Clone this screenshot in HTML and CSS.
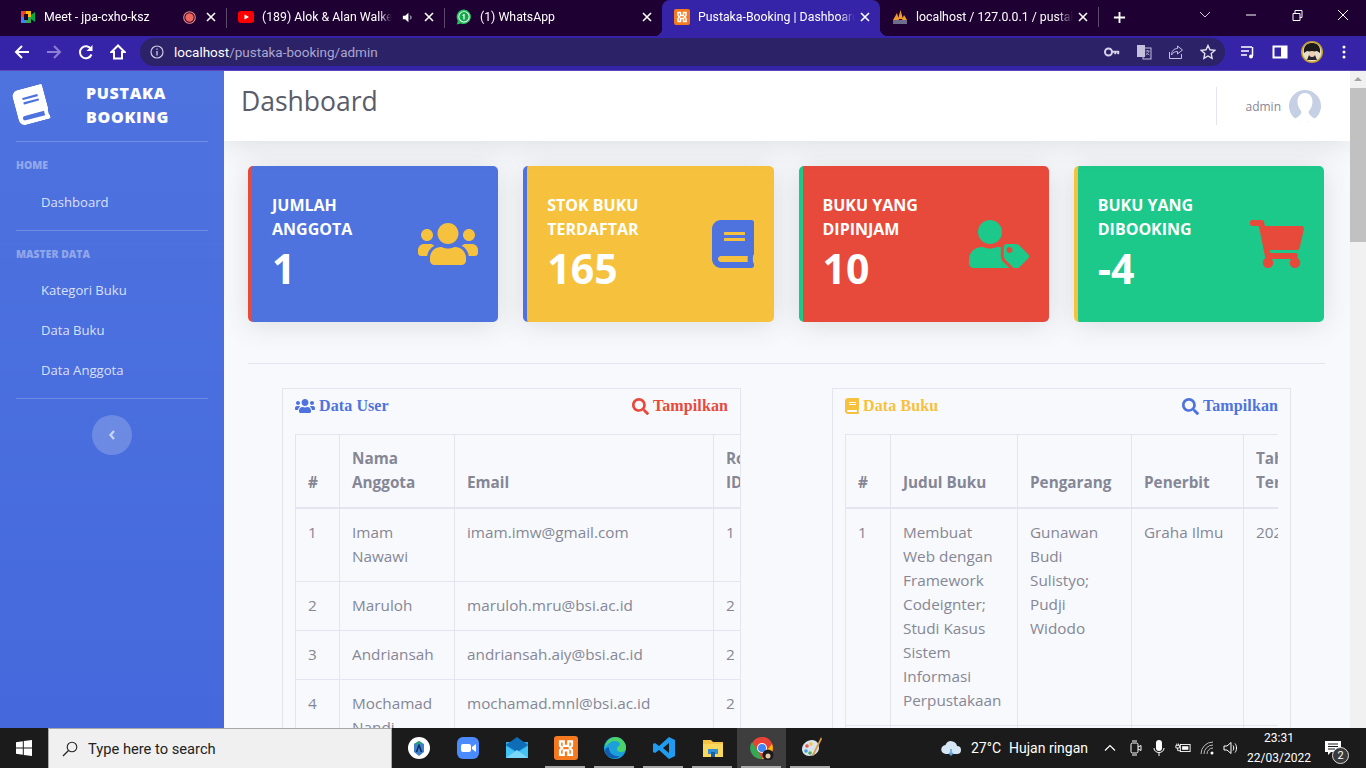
FILE: index.html
```html
<!DOCTYPE html>
<html lang="id">
<head>
<meta charset="utf-8">
<title>Pustaka-Booking | Dashboard</title>
<link rel="stylesheet" href="styles.css">
</head>
<body>
<svg class="defs" aria-hidden="true">
  <symbol id="i-users" viewBox="0 0 640 512"><path d="M96 224c35.3 0 64-28.7 64-64s-28.7-64-64-64-64 28.7-64 64 28.7 64 64 64zm448 0c35.3 0 64-28.7 64-64s-28.7-64-64-64-64 28.7-64 64 28.7 64 64 64zm32 32h-64c-17.6 0-33.5 7.1-45.1 18.6 40.3 22.1 68.9 62 75.1 109.4h66c17.7 0 32-14.3 32-32v-32c0-35.3-28.7-64-64-64zm-256 0c61.9 0 112-50.1 112-112S381.9 32 320 32 208 82.1 208 144s50.1 112 112 112zm76.8 32h-8.3c-20.8 10-43.9 16-68.5 16s-47.6-6-68.5-16h-8.3C179.6 288 128 339.6 128 403.2V432c0 26.5 21.5 48 48 48h288c26.5 0 48-21.5 48-48v-28.8c0-63.6-51.6-115.2-115.2-115.2zm-223.7-13.4C161.5 263.1 145.6 256 128 256H64c-35.3 0-64 28.7-64 64v32c0 17.7 14.3 32 32 32h65.9c6.3-47.4 34.9-87.3 75.2-109.4z"/></symbol>
  <symbol id="i-book" viewBox="0 0 448 512"><path d="M448 360V24c0-13.3-10.7-24-24-24H96C43 0 0 43 0 96v320c0 53 43 96 96 96h328c13.3 0 24-10.7 24-24v-16c0-7.5-3.5-14.3-8.9-18.7-4.2-15.4-4.2-59.3 0-74.7 5.4-4.3 8.9-11.1 8.9-18.6zM128 134c0-3.3 2.7-6 6-6h212c3.3 0 6 2.7 6 6v20c0 3.3-2.7 6-6 6H134c-3.3 0-6-2.7-6-6v-20zm0 64c0-3.3 2.7-6 6-6h212c3.3 0 6 2.7 6 6v20c0 3.3-2.7 6-6 6H134c-3.3 0-6-2.7-6-6v-20zm253.4 250H96c-17.7 0-32-14.3-32-32 0-17.6 14.4-32 32-32h285.4c-1.9 17.1-1.9 46.9 0 64z"/></symbol>
  <symbol id="i-tag" viewBox="0 0 640 512"><path d="M630.6 364.9l-90.3-90.2c-12-12-28.3-18.7-45.3-18.7h-92.5c-17.7 0-32 14.3-32 32v92.5c0 17 6.7 33.3 18.7 45.3l90.3 90.2c12.5 12.5 32.8 12.5 45.3 0l106.5-106.5c12.4-12.5 12.4-32.8-.2-45.3zM432 352c-17.7 0-32-14.3-32-32s14.3-32 32-32 32 14.3 32 32-14.3 32-32 32zM224 256c70.7 0 128-57.3 128-128S294.7 0 224 0 96 57.3 96 128s57.3 128 128 128zM134.4 288h16.7c22.3 10.2 46.9 16 72.9 16s50.6-5.8 72.9-16H339v92c0 25 10 50 28 68l64 64H48c-26.5 0-48-21.5-48-48v-41.6C0 348.2 60.2 288 134.4 288z"/></symbol>
  <symbol id="i-cart" viewBox="0 0 576 512"><path d="M528.12 301.319l47.273-208C578.806 78.301 567.391 64 551.99 64H159.208l-9.166-44.81C147.758 8.021 137.93 0 126.529 0H24C10.745 0 0 10.745 0 24v16c0 13.255 10.745 24 24 24h69.883l70.248 343.435C147.325 417.1 136 435.222 136 456c0 30.928 25.072 56 56 56s56-25.072 56-56c0-15.674-6.447-29.835-16.824-40h209.647C430.447 426.165 424 440.326 424 456c0 30.928 25.072 56 56 56s56-25.072 56-56c0-22.172-12.888-41.332-31.579-50.405l5.517-24.276c3.413-15.018-8.002-29.319-23.403-29.319H218.117l-6.545-32h293.145c11.206 0 20.92-7.754 23.403-18.681z"/></symbol>
  <symbol id="i-search" viewBox="0 0 512 512"><path d="M505 442.7L405.3 343c-4.5-4.5-10.6-7-17-7H372c27.6-35.3 44-79.7 44-128C416 93.1 322.9 0 208 0S0 93.1 0 208s93.1 208 208 208c48.3 0 92.7-16.4 128-44v16.3c0 6.4 2.5 12.5 7 17l99.7 99.7c9.4 9.4 24.6 9.4 33.9 0l28.3-28.3c9.4-9.4 9.4-24.6.1-34zM208 336c-70.7 0-128-57.2-128-128 0-70.7 57.2-128 128-128 70.7 0 128 57.2 128 128 0 70.7-57.2 128-128 128z"/></symbol>
  <symbol id="i-x" viewBox="0 0 12 12"><path d="M2 2l8 8M10 2l-8 8" fill="none" stroke="currentColor" stroke-width="1.6"/></symbol>
  <symbol id="i-xampp" viewBox="0 0 16 16"><rect width="16" height="16" rx="2" fill="#f4791f"/><path d="M4 3.5h2.5v3h3v-3H12v3l-1.5 1.5L12 9.500v3H9.500v-3h-3v3H4v-3L5.500 8 4 6.500z" fill="none" stroke="#fff" stroke-width="1.5"/></symbol>
</svg>

<header class="tabbar">
  <div class="tab">
    <svg class="favicon" viewBox="0 0 16 16"><rect x="1" y="2" width="5" height="6" fill="#ea4335"/><rect x="6" y="2" width="5" height="6" fill="#fbbc04"/><rect x="1" y="8" width="5" height="6" fill="#4285f4"/><rect x="6" y="8" width="5" height="6" fill="#34a853"/><path d="M11 6l4-3v10l-4-3z" fill="#00ac47"/><rect x="4" y="5" width="4" height="6" fill="#1f0033"/></svg>
    <span class="tab-title">Meet - jpa-cxho-ksz</span>
    <svg class="tab-extra" viewBox="0 0 14 14"><circle cx="7" cy="7" r="6.200" fill="none" stroke="#f28b82" stroke-width="1.200"/><circle cx="7" cy="7" r="4.500" fill="#ee675c"/></svg>
    <svg class="tab-close"><use href="#i-x"/></svg>
  </div>
  <div class="tab tab-sep">
    <svg class="favicon" viewBox="0 0 16 16"><rect y="2" width="16" height="12" rx="3" fill="#f00"/><path d="M6.500 5.500L11 8l-4.500 2.500z" fill="#fff"/></svg>
    <span class="tab-title">(189) Alok &amp; Alan Walker - Sing Me to Sleep</span>
    <svg class="tab-extra" viewBox="0 0 14 14"><path d="M2 5h2.500L8 2v10L4.500 9H2z" fill="#fff"/><path d="M10 5c1 1 1 3 0 4" fill="none" stroke="#fff"/></svg>
    <svg class="tab-close"><use href="#i-x"/></svg>
  </div>
  <div class="tab tab-sep">
    <svg class="favicon" viewBox="0 0 16 16"><path d="M8 .500a7.300 7.300 0 0 0-6.200 11.200L.800 15.500l3.900-1A7.300 7.300 0 1 0 8 .500z" fill="#25c15b"/><circle cx="8" cy="7.800" r="5.600" fill="#fff"/><circle cx="8" cy="7.800" r="4.700" fill="#12a84a"/><path d="M8.600 5v5.500H7.400V6.300L6.400 7V5.900L7.800 5z" fill="#fff"/></svg>
    <span class="tab-title">(1) WhatsApp</span>
    <svg class="tab-close"><use href="#i-x"/></svg>
  </div>
  <div class="tab tab-active">
    <svg class="favicon"><use href="#i-xampp"/></svg>
    <span class="tab-title">Pustaka-Booking | Dashboard</span>
    <svg class="tab-close"><use href="#i-x"/></svg>
  </div>
  <div class="tab">
    <svg class="favicon" viewBox="0 0 16 16"><path d="M1 11L5 4l2 7zM6 10L8.500 1 11 10zM10 11l2-5 3 5z" fill="#f29a2e"/><rect x="1" y="11" width="14" height="4" fill="#6c6c8c"/></svg>
    <span class="tab-title">localhost / 127.0.0.1 / pustaka_booking</span>
    <svg class="tab-close"><use href="#i-x"/></svg>
  </div>
  <div class="tab-new"><span class="new-sep"></span><svg class="plus" viewBox="0 0 14 14"><path d="M7 1v12M1 7h12" stroke="#fff" stroke-width="2"/></svg></div>
  <div class="winctl">
    <svg class="winbtn" viewBox="0 0 46 16"><path d="M18 5l5 5 5-5" fill="none" stroke="#cfcfd8"/></svg>
    <svg class="winbtn" viewBox="0 0 46 16"><path d="M18 8h10" stroke="#fff"/></svg>
    <svg class="winbtn" viewBox="0 0 46 16"><path d="M19 6.500h7v7h-7zM21 6V3.500h7v7h-2" fill="none" stroke="#fff"/></svg>
    <svg class="winbtn" viewBox="0 0 46 16"><path d="M18 3l10 10M28 3L18 13" stroke="#fff"/></svg>
  </div>
</header>

<nav class="toolbar">
  <svg class="tool" viewBox="0 0 16 16"><path d="M15 8H2M8 2L2 8l6 6" fill="none" stroke="#fff" stroke-width="2"/></svg>
  <svg class="tool" viewBox="0 0 16 16"><path d="M1 8h13M8 2l6 6-6 6" fill="none" stroke="#8d80d4" stroke-width="2"/></svg>
  <svg class="tool" viewBox="0 0 16 16"><path d="M13.500 10.500A6 6 0 1 1 13 5" fill="none" stroke="#fff" stroke-width="2"/><path d="M14.500 1v6h-6z" fill="#fff"/></svg>
  <svg class="tool" viewBox="0 0 16 16"><path d="M8 1.500L1.500 8H4v6.500h8V8h2.500z" fill="none" stroke="#fff" stroke-width="2"/></svg>
  <div class="omnibox">
    <svg class="omni-info" viewBox="0 0 14 14"><circle cx="7" cy="7" r="6" fill="none" stroke="#cfcbe8" stroke-width="1.200"/><path d="M7 6v4.500M7 3.500v1.300" stroke="#cfcbe8" stroke-width="1.300"/></svg>
    <span class="url"><b class="url-host">localhost</b>/pustaka-booking/admin</span>
    <span class="omni-actions">
      <svg class="omni-act" viewBox="0 0 16 16"><circle cx="4.500" cy="8" r="3.500" fill="none" stroke="#d6d3ea" stroke-width="2"/><path d="M8 7h7v3h-1.500v-1.500H12V10h-1.500V8.500H8z" fill="#d6d3ea" stroke="#d6d3ea" stroke-width=".5"/></svg>
      <svg class="omni-act" viewBox="0 0 16 16"><rect x="1" y="1" width="8" height="12" fill="#c4c1dc"/><rect x="7" y="4" width="8" height="11" fill="none" stroke="#c4c1dc"/><path d="M9.500 7h4M11.500 6v1M13 7c-.5 2-2 3.500-3.500 4M10 8.500c.8 1.200 2 2 3.500 2.500" stroke="#c4c1dc" fill="none" stroke-width=".8"/></svg>
      <svg class="omni-act" viewBox="0 0 16 16"><path d="M1.500 8v6.500h12V10" fill="none" stroke="#c4c1dc"/><path d="M9.500 2l5 4-5 4V7.500c-3 0-4.500 1-6 3.500 0-4 2.500-6.500 6-6.500z" fill="none" stroke="#c4c1dc"/></svg>
      <svg class="omni-act" viewBox="0 0 16 16"><path d="M8 1.500l2 4.300 4.700.6-3.500 3.200.9 4.700L8 12l-4.100 2.300.9-4.700L1.300 6.400 6 5.800z" fill="none" stroke="#e5e3f3" stroke-width="1.400"/></svg>
    </span>
  </div>
  <svg class="tool2" viewBox="0 0 16 16"><path d="M1 3h11M1 7h8M1 11h6" stroke="#fff" stroke-width="1.500"/><path d="M12.500 3v9" stroke="#fff" stroke-width="1.500"/><circle cx="11" cy="12.500" r="2" fill="#fff"/></svg>
  <svg class="tool2" viewBox="0 0 16 16"><path d="M1.500 2.500h13v11h-13z" fill="none" stroke="#fff" stroke-width="2"/><rect x="9" y="2.500" width="5" height="11" fill="#fff"/></svg>
  <svg class="tool2 profile" viewBox="0 0 24 24"><circle cx="12" cy="12" r="11" fill="#c9a227"/><circle cx="12" cy="12" r="9.500" fill="#e4dfc9"/><path d="M4 13C3 5 8 3 12 3s9 2 8 10l-3-2-5 1-5-1z" fill="#1d1a1a"/><path d="M7 20l2-5h6l2 5z" fill="#2a2430"/><circle cx="12" cy="14" r="3" fill="#eecfb4"/></svg>
  <svg class="tool2" viewBox="0 0 16 16"><circle cx="8" cy="3" r="1.500" fill="#fff"/><circle cx="8" cy="8" r="1.500" fill="#fff"/><circle cx="8" cy="13" r="1.500" fill="#fff"/></svg>
</nav>

<div class="viewport">
  <aside class="sidebar">
    <div class="brand">
      <svg class="brand-icon"><use href="#i-book"/></svg>
      <span class="brand-text">Pustaka Booking</span>
    </div>
    <hr class="side-hr">
    <div class="side-head">Home</div>
    <a class="side-link">Dashboard</a>
    <hr class="side-hr side-hr-b">
    <div class="side-head">Master Data</div>
    <a class="side-link">Kategori Buku</a>
    <a class="side-link">Data Buku</a>
    <a class="side-link">Data Anggota</a>
    <hr class="side-hr side-hr-c">
    <div class="side-toggle"><svg class="chev" viewBox="0 0 8 12"><path d="M6 2L2.500 6 6 10" fill="none" stroke="#c6d2f3" stroke-width="2.400"/></svg></div>
  </aside>

  <main class="main">
    <div class="topbar">
      <h1 class="page-title">Dashboard</h1>
      <div class="user">
        <span class="user-name">admin</span>
        <svg class="user-avatar" viewBox="0 0 32 32"><circle cx="16" cy="16" r="16" fill="#c5d0e4"/><path d="M16 3c5 0 7.500 4 7.500 9 0 4-2 7-3.500 9-1 1.500 0 3 2 5 1 1 3 2.500 5 2.500A16 16 0 0 1 16 32a16 16 0 0 1-11-3.500c2 0 4-1.500 5-2.500 2-2 3-3.500 2-5-1.500-2-3.500-5-3.500-9 0-5 2.500-9 7.500-9z" fill="#fff"/></svg>
      </div>
    </div>

    <div class="content">
      <section class="cards">
        <article class="card card-blue">
          <div class="card-text"><div class="card-label">Jumlah Anggota</div><div class="card-num">1</div></div>
          <svg class="card-icon icon-users"><use href="#i-users"/></svg>
        </article>
        <article class="card card-yellow">
          <div class="card-text"><div class="card-label">Stok Buku Terdaftar</div><div class="card-num">165</div></div>
          <svg class="card-icon icon-book"><use href="#i-book"/></svg>
        </article>
        <article class="card card-red">
          <div class="card-text"><div class="card-label">Buku Yang Dipinjam</div><div class="card-num">10</div></div>
          <svg class="card-icon icon-users"><use href="#i-tag"/></svg>
        </article>
        <article class="card card-green">
          <div class="card-text"><div class="card-label">Buku Yang Dibooking</div><div class="card-num">-4</div></div>
          <svg class="card-icon icon-cart"><use href="#i-cart"/></svg>
        </article>
      </section>

      <hr class="divider">

      <section class="panels">
        <div class="panel">
          <div class="panel-head">
            <span class="panel-title c-blue"><svg class="pi-users"><use href="#i-users"/></svg>Data User</span>
            <span class="panel-title c-red"><svg class="pi-search"><use href="#i-search"/></svg>Tampilkan</span>
          </div>
          <div class="table-wrap table-wrap-l">
            <table class="tbl tbl-user">
              <colgroup><col class="u1"><col class="u2"><col class="u3"><col class="u4"></colgroup>
              <thead><tr><th>#</th><th>Nama Anggota</th><th>Email</th><th>Role ID</th></tr></thead>
              <tbody>
                <tr><td>1</td><td>Imam Nawawi</td><td>imam.imw@gmail.com</td><td>1</td></tr>
                <tr><td>2</td><td>Maruloh</td><td>maruloh.mru@bsi.ac.id</td><td>2</td></tr>
                <tr><td>3</td><td>Andriansah</td><td>andriansah.aiy@bsi.ac.id</td><td>2</td></tr>
                <tr><td>4</td><td>Mochamad Nandi</td><td>mochamad.mnl@bsi.ac.id</td><td>2</td></tr>
              </tbody>
            </table>
          </div>
        </div>
        <div class="panel">
          <div class="panel-head">
            <span class="panel-title c-yellow"><svg class="pi-book"><use href="#i-book"/></svg>Data Buku</span>
            <span class="panel-title c-blue"><svg class="pi-search"><use href="#i-search"/></svg>Tampilkan</span>
          </div>
          <div class="table-wrap table-wrap-r">
            <table class="tbl tbl-book">
              <colgroup><col class="b1"><col class="b2"><col class="b3"><col class="b4"><col class="b5"></colgroup>
              <thead><tr><th>#</th><th>Judul Buku</th><th>Pengarang</th><th>Penerbit</th><th>Tahun Terbit</th></tr></thead>
              <tbody>
                <tr><td>1</td><td>Membuat Web dengan Framework Codeignter; Studi Kasus Sistem Informasi Perpustakaan</td><td>Gunawan Budi Sulistyo; Pudji Widodo</td><td>Graha Ilmu</td><td>2020</td></tr>
                <tr><td>2</td><td></td><td></td><td></td><td></td></tr>
              </tbody>
            </table>
          </div>
        </div>
      </section>
    </div>
  </main>

  <div class="scrollbar">
    <span class="scroll-up"></span>
    <span class="scroll-thumb"></span>
  </div>
</div>

<footer class="taskbar">
  <div class="start"><svg class="win-logo" viewBox="0 0 16 16"><path d="M0 2.200L6.800 1.200V7.500H0zM7.800 1L16 0V7.500H7.800zM0 8.500H6.800V14.800L0 13.800zM7.800 8.500H16V16L7.800 15z" fill="#fff"/></svg></div>
  <div class="search"><svg class="search-glass" viewBox="0 0 16 16"><circle cx="10" cy="6" r="4.800" fill="none" stroke="#222" stroke-width="1.100"/><path d="M6.500 9.500L1 15" stroke="#222" stroke-width="1.200"/></svg><span class="search-text">Type here to search</span></div>
  <div class="apps">
    <div class="app"><svg class="app-i" viewBox="0 0 24 24"><circle cx="12" cy="12" r="11" fill="#fff"/><path d="M7 8l5-3 5 3v8l-5 4-5-4z" fill="#3f7fd0"/><path d="M9.500 16L12 9l2.500 7" fill="none" stroke="#0d2a5c" stroke-width="1.500"/><path d="M7 8l5-3 3 2-5 2z" fill="#2aa17a"/></svg></div>
    <div class="app"><svg class="app-i" viewBox="0 0 24 24"><rect x="1" y="1" width="22" height="22" rx="6" fill="#4a8cff"/><rect x="5" y="8" width="10" height="8" rx="2" fill="#fff"/><path d="M16 11l4-3v8l-4-3z" fill="#fff"/></svg></div>
    <div class="app"><svg class="app-i" viewBox="0 0 24 24"><rect x="1" y="6" width="22" height="16" fill="#2aa5e6"/><path d="M1 9l11-8 11 8-11 7z" fill="#0f6cb6"/><path d="M1 10l11 7 11-7v12H1z" fill="#42c2f5"/><path d="M1 22l11-8 11 8z" fill="#7bd8fb"/></svg></div>
    <div class="app app-open"><svg class="app-i" viewBox="0 0 16 16"><use href="#i-xampp"/></svg></div>
    <div class="app app-open"><svg class="app-i" viewBox="0 0 24 24"><circle cx="12" cy="12" r="11" fill="#1ba0dc"/><path d="M12 1a11 11 0 0 1 11 11c0 3-3 4.500-6 4-2-.3-3-1.500-3-3 0-3 3-3 3-5-1-3-6-4-9-2-3 1.500-5 4-6 6A11 11 0 0 1 12 1z" fill="#4bd36b"/><path d="M6 12c0 6 6 9 11 8-6 5-15 1-15-6 1-2 3-3 4-2z" fill="#0f5cb0"/></svg></div>
    <div class="app app-open"><svg class="app-i" viewBox="0 0 24 24"><path d="M17 1l6 3v16l-6 3-10-9-4 3-2-1V8l2-1 4 3zm0 6l-6 5 6 5z" fill="#1f9cf0"/></svg></div>
    <div class="app app-open"><svg class="app-i" viewBox="0 0 24 24"><path d="M2 4h8l2 2h10v15H2z" fill="#f5c344"/><rect x="2" y="8" width="20" height="13" fill="#fbd75b"/><rect x="7" y="13" width="10" height="5" fill="#2f8fd8"/><rect x="10" y="16" width="4" height="5" fill="#1a5fa0"/></svg></div>
    <div class="app app-open app-active"><svg class="app-i" viewBox="0 0 24 24"><circle cx="12" cy="12" r="11" fill="#ea4335"/><path d="M12 1a11 11 0 0 1 10 7H12z" fill="#ea4335"/><path d="M22 8a11 11 0 0 1-10 15l5-9z" fill="#fbbc04"/><path d="M2 6l6 9 4 8A11 11 0 0 1 2 6z" fill="#34a853"/><circle cx="12" cy="12" r="5" fill="#fff"/><circle cx="12" cy="12" r="4" fill="#4285f4"/><circle cx="18" cy="19" r="5.500" fill="#1c1a1a"/><circle cx="18" cy="20" r="2.500" fill="#e6c9a8"/></svg></div>
    <div class="app app-open"><svg class="app-i" viewBox="0 0 24 24"><path d="M3 13c0-5 5-9 10-9s7 4 7 8-4 8-10 8c-4 0-7-3-7-7z" fill="#d8e3ec"/><circle cx="8" cy="10" r="1.800" fill="#e8534a"/><circle cx="12" cy="8" r="1.800" fill="#f5c344"/><circle cx="7" cy="15" r="1.800" fill="#3e9fe0"/><circle cx="11" cy="17" r="1.800" fill="#49b05a"/><path d="M22 1l-9 18 1.500 1L23 3z" fill="#d89a45"/></svg></div>
  </div>
  <div class="tray">
    <svg class="weather" viewBox="0 0 22 18"><path d="M6 15a4.500 4.500 0 0 1-.5-9A6 6 0 0 1 17 7a4 4 0 0 1 0 8z" fill="#d6e6f5"/><path d="M11 10v6M9 14l2 2 2-2" fill="none" stroke="#5aa0dc" stroke-width="1.500"/></svg>
    <span class="tray-text temp">27°C</span>
    <span class="tray-text cond">Hujan ringan</span>
    <svg class="tray-i chevup" viewBox="0 0 16 16"><path d="M3 10.500L8 5.500l5 5" fill="none" stroke="#fff" stroke-width="1.200"/></svg>
    <svg class="tray-i" viewBox="0 0 16 16"><rect x="4" y="3" width="7" height="10" rx="1.500" fill="none" stroke="#fff"/><path d="M11 7l3-1.500v5L11 9M5 1h5M5 15h5" stroke="#fff" fill="none"/></svg>
    <svg class="tray-i" viewBox="0 0 16 16"><rect x="5" y="0" width="6" height="11" rx="3" fill="#fff"/><path d="M3 8c0 6 10 6 10 0M8 13v3" fill="none" stroke="#fff"/></svg>
    <svg class="tray-i" viewBox="0 0 18 16"><rect x="6" y="4" width="11" height="8" fill="none" stroke="#fff"/><rect x="8" y="6" width="7" height="4" fill="#fff"/><path d="M1 5h4v3H1zM2 3v2M4 3v2M3 8v3h3" stroke="#fff" fill="none"/></svg>
    <svg class="tray-i" viewBox="0 0 16 16"><path d="M2 14a12 12 0 0 1 12-12M5 14a9 9 0 0 1 9-9M8 14a6 6 0 0 1 6-6" fill="none" stroke="#bbb"/><circle cx="13" cy="13" r="1.500" fill="#fff"/></svg>
    <svg class="tray-i" viewBox="0 0 16 16"><path d="M1 6h3l4-3.500v11L4 10H1z" fill="none" stroke="#fff"/><path d="M10 5.500c1 1.500 1 3.500 0 5M12 3.500c2 2.500 2 6.500 0 9" fill="none" stroke="#fff"/></svg>
    <div class="clock"><span>23:31</span><span>22/03/2022</span></div>
    <div class="notif">
      <svg class="notif-i" viewBox="0 0 16 16"><path d="M0 1h16v11H6l-3 3v-3H0z" fill="#fff"/><path d="M3 4h10M3 6.500h10M3 9h7" stroke="#1b1b1b"/></svg>
      <span class="notif-badge">2</span>
    </div>
  </div>
</footer>
</body>
</html>
```

FILE: styles.css
```css
* { box-sizing: border-box; }
html, body { margin: 0; height: 100%; overflow: hidden; }
body { display: flex; flex-direction: column; width: 1366px; height: 768px; font-family: "Open Sans", "Liberation Sans", sans-serif; background: #f8f9fc; }
.defs { display: none; }

/* browser tabs */
.tabbar { display: flex; align-items: stretch; height: 36px; background: #1f0033; padding-left: 8px; flex: none; }
.tab { position: relative; display: flex; align-items: center; flex: none; width: 218px; padding: 0 9px 2px 12px; color: #fff; font: 12.300px/16px Roboto, "Open Sans", sans-serif; }
.tab-sep::before { content: ""; position: absolute; left: 0; top: 8px; height: 20px; width: 1px; background: #5c4a6c; }
.tab-active { background: #3524a8; border-radius: 8px 8px 0 0; }
.tab-active::before, .tab-active::after { content: ""; position: absolute; bottom: 0; width: 8px; height: 8px; }
.tab-active::before { left: -8px; background: radial-gradient(circle at 0 0, transparent 8px, #3524a8 8.5px); }
.tab-active::after { right: -8px; background: radial-gradient(circle at 100% 0, transparent 8px, #3524a8 8.5px); }
.favicon { width: 16px; height: 16px; flex: none; margin-right: 8px; }
.tab-title { flex: 1; min-width: 0; white-space: nowrap; overflow: hidden; -webkit-mask-image: linear-gradient(90deg, #000 90%, transparent); mask-image: linear-gradient(90deg, #000 90%, transparent); }
.tab-extra { width: 13px; height: 13px; flex: none; margin: 0 5px 0 9px; }
.tab-close { width: 12px; height: 12px; flex: none; color: #fff; margin-left: 4px; }
.tab-new { display: flex; align-items: center; flex: none; width: 84px; padding-bottom: 2px; }
.new-sep { width: 1px; height: 20px; background: #5c4a6c; }
.plus { width: 13px; height: 13px; margin-left: 14px; }
.winctl { margin-left: auto; display: flex; align-items: flex-start; padding-top: 7px; flex: none; }
.winbtn { width: 46px; height: 16px; }

/* toolbar */
.toolbar { display: flex; align-items: center; height: 35px; flex: none; background: #3524a8; border-bottom: 1px solid #5b48b8; padding: 0 0 3px 14px; }
.tool { width: 16px; height: 16px; margin-right: 16px; flex: none; }
.omnibox { display: flex; align-items: center; width: 1085px; height: 28px; margin-left: -2px; margin-right: 15px; border-radius: 14px; background: #2c2267; padding-left: 10px; flex: none; }
.omni-info { width: 14px; height: 14px; margin-right: 10px; }
.url { color: #aaa6d0; font: 13.500px/18px Roboto, sans-serif; white-space: nowrap; }
.url-host { color: #fff; font-weight: 400; }
.omni-actions { margin-left: auto; display: flex; gap: 16px; padding-right: 9px; }
.omni-act { width: 16px; height: 16px; }
.tool2 { width: 16px; height: 16px; margin-right: 16px; flex: none; }
.profile { width: 24px; height: 24px; margin: 0 12px 0 -4px; }

/* page */
.viewport { flex: 1; min-height: 0; display: flex; }
.sidebar { width: 224px; flex: none; background: linear-gradient(180deg, #4e73df 0%, #4569dc 100%); padding: 0 16px; color: #fff; }
.brand { display: flex; align-items: center; height: 70px; padding-bottom: 2px; }
.brand-icon { width: 32px; height: 36px; fill: #fff; transform: rotate(-15deg); margin-left: -1px; flex: none; }
.brand-text { width: 110px; margin-left: 39px; font-weight: 800; font-size: 16px; line-height: 24px; letter-spacing: .7px; text-transform: uppercase; }
.side-hr { border: 0; border-top: 1px solid rgba(255,255,255,.2); margin: 0; }
.side-head { font-size: 10.400px; font-weight: 800; line-height: 14px; color: rgba(255,255,255,.4); text-transform: uppercase; margin: 16px 0 10px; }
.side-hr-b + .side-head { margin-bottom: 9px; }
.side-link { display: block; height: 40px; padding-left: 25px; font-size: 13.100px; line-height: 40px; color: rgba(255,255,255,.8); }
.side-hr-b { margin-top: 8px; }
.side-hr-c { margin-top: 8px; }
.side-toggle { width: 40px; height: 40px; border-radius: 50%; background: rgba(255,255,255,.2); margin: 16px auto 0; display: flex; align-items: center; justify-content: center; }
.chev { width: 8px; height: 12px; }

.main { flex: 1; min-width: 0; overflow: hidden; }
.topbar { display: flex; align-items: center; justify-content: space-between; height: 70px; padding: 0 29px 10px 17px; background: #fff; box-shadow: 0 .15rem 1.75rem rgba(58,59,69,.15); position: relative; }
.page-title { margin: 0; font-size: 26.500px; line-height: 40px; font-weight: 400; color: #5a5c69; }
.user { display: flex; align-items: center; gap: 8px; height: 38px; margin-top: 10px; padding-left: 28px; border-left: 1px solid #e3e6f0; }
.user-name { font-size: 12px; color: #858796; }
.user-avatar { width: 32px; height: 32px; }

.content { padding: 25px 25px 0 24px; }
.cards { display: grid; grid-template-columns: repeat(4, 1fr); gap: 25px; padding-right: 1px; }
.card { display: flex; align-items: center; justify-content: space-between; height: 156px; padding: 0 20px; border-left: 4px solid; border-radius: 5px; color: #fff; box-shadow: 0 .15rem 1.75rem rgba(58,59,69,.15); }
.card-blue { background: #4e73df; border-color: #e74a3b; fill: #f6c23e; }
.card-yellow { background: #f6c23e; border-color: #4e73df; fill: #4e73df; }
.card-red { background: #e74a3b; border-color: #1cc88a; fill: #1cc88a; }
.card-green { background: #1cc88a; border-color: #f6c23e; fill: #e74a3b; }
.card-text { padding-bottom: 3px; }
.card-label { max-width: 130px; margin-bottom: 3px; font-size: 16px; line-height: 24px; font-weight: 700; text-transform: uppercase; }
.card-num { font-size: 41px; line-height: 48px; font-weight: 700; }
.card-icon { height: 48px; flex: none; }
.icon-users { width: 60px; }
.icon-book { width: 42px; }
.icon-cart { width: 54px; }

.divider { border: 0; border-top: 1px solid #e3e6f0; margin: 41px 0 24px; }
.panels { display: grid; grid-template-columns: 1fr 1fr; gap: 91px; padding: 0 34px; }
.panel { border: 1px solid #e3e6f0; min-width: 0; height: 400px; overflow: hidden; }
.panel-head { display: flex; justify-content: space-between; align-items: center; height: 45px; padding: 0 12px 11px; }
.panel-title { display: flex; align-items: center; font: 700 16px/20px "Liberation Serif", serif; letter-spacing: .1px; }
.c-blue { color: #4e73df; fill: #4e73df; }
.c-red { color: #e74a3b; fill: #e74a3b; }
.c-yellow { color: #f6c23e; fill: #f6c23e; }
.pi-users { width: 20px; height: 16px; margin-right: 4px; }
.pi-book { width: 14px; height: 16px; margin-right: 4px; }
.pi-search { width: 17px; height: 17px; margin-right: 4px; }
.table-wrap { overflow: hidden; }
.table-wrap-l { margin-left: 12px; }
.table-wrap-r { margin: 0 12px; }
.tbl { border-collapse: collapse; table-layout: fixed; color: #858796; font-size: 15.300px; line-height: 24px; }
.tbl th, .tbl td { border: 1px solid #e3e6f0; padding: 11px 12px 13px; vertical-align: top; text-align: left; overflow: hidden; }
.tbl th { vertical-align: bottom; font-weight: 700; border-bottom-width: 2px; }
.tbl-user { width: 488px; }
.tbl-book { width: 500px; }
.u1 { width: 44px; } .u2 { width: 115px; } .u3 { width: 259px; } .u4 { width: 70px; }
.b1 { width: 45px; } .b2 { width: 127px; } .b3 { width: 114px; } .b4 { width: 112px; } .b5 { width: 102px; }

.scrollbar { width: 16px; flex: none; background: #f1f1f1; display: flex; flex-direction: column; align-items: center; }
.scroll-up { margin-top: 6px; width: 0; height: 0; border: 4px solid transparent; border-top: 0; border-bottom: 4px solid #a3a3a3; }
.scroll-thumb { width: 100%; height: 154px; margin-top: 7px; background: #c1c1c1; }

/* taskbar */
.taskbar { display: flex; align-items: center; height: 40px; flex: none; background: #1b1b1b; color: #fff; }
.start { width: 48px; display: flex; justify-content: center; }
.win-logo { width: 16px; height: 16px; }
.search { display: flex; align-items: center; width: 344px; height: 40px; background: #f0f0f0; padding-left: 13px; border: 1px solid #a8a8a8; border-bottom: 0; }
.search-glass { width: 16px; height: 16px; margin-right: 10px; }
.search-text { color: #222; font: 14.700px/20px Roboto, sans-serif; padding-top: 1px; }
.apps { display: flex; padding-left: 2px; }
.app { position: relative; width: 49px; height: 40px; display: flex; align-items: center; justify-content: center; }
.app-open::after { content: ""; position: absolute; left: 4px; right: 5px; bottom: 0; height: 2px; background: #a9a9a9; }
.app-active { background: #3e3e3e; }
.app-i { width: 24px; height: 24px; }
.tray { margin-left: auto; display: flex; align-items: center; padding-right: 10px; font: 14px/18px Roboto, sans-serif; }
.weather { width: 22px; height: 18px; margin-right: 9px; }
.tray-text { color: #fff; }
.temp { margin-right: 8px; }
.cond { margin-right: 14px; }
.tray-i { width: 16px; height: 16px; margin-right: 8px; }
.chevup { margin-right: 9px; }
.clock { display: flex; flex-direction: column; align-items: center; width: 66px; margin: 0 -2px 0 -1px; font-size: 12px; line-height: 20px; }
.notif { position: relative; width: 46px; height: 40px; display: flex; align-items: center; justify-content: center; }
.notif-i { width: 16px; height: 16px; }
.notif-badge { position: absolute; right: 7px; bottom: 4px; width: 17px; height: 17px; border-radius: 50%; background: #3a3a3a; border: 1px solid #ddd; font-size: 11px; line-height: 15px; text-align: center; color: #fff; }
```
